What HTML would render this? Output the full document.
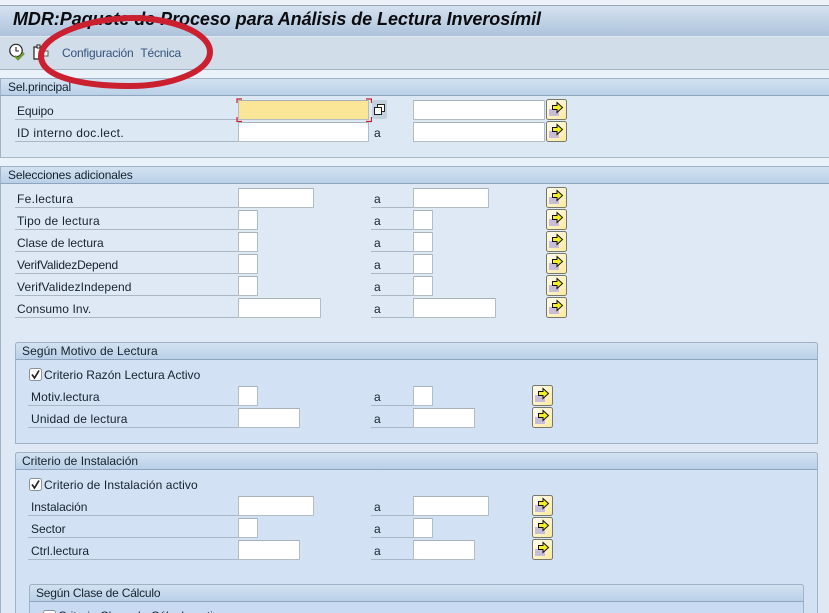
<!DOCTYPE html>
<html><head><meta charset="utf-8">
<style>
html,body{margin:0;padding:0;width:829px;height:613px;overflow:hidden}
#p{position:absolute;left:0;top:0;width:829px;height:613px;overflow:hidden;background:#dfe9f6;font-family:"Liberation Sans",sans-serif;font-size:12px;color:#16222e}
#p div,#p span.t,#p svg{position:absolute}
.t{white-space:nowrap;line-height:14px}
.i{background:#fff;border:1px solid #b4bcc4;border-top-color:#a8b0b8;box-sizing:border-box;border-radius:1px}
.l{height:1px;background:#a9b7c6}
.h{background:linear-gradient(#d3e2f2,#b9d0e7);border-bottom:1px solid #8fa5bd;box-sizing:border-box}
.b{width:21px;height:21px}
</style></head><body>
<div id="p">
<svg width="0" height="0"><defs><linearGradient id="g" x1="0" y1="0" x2="1" y2="1"><stop offset="0" stop-color="#fffdf0"/><stop offset="1" stop-color="#fbe99c"/></linearGradient><symbol id="btn" viewBox="0 0 21 21"><rect x=".5" y=".5" width="20" height="20" rx="2" fill="url(#g)" stroke="#77776a"/><rect x="3" y="10" width="10" height="7" fill="#c9bcd6"/><path d="M6.500 6.500H11V3.500L16.500 8.500 11 13.500V10.500H6.500Z" fill="#f5ef1e" stroke="#111" stroke-width="1"/></symbol></defs></svg>

<div style="left:0;top:0;width:829px;height:5px;background:#edf2f9"></div>
<div style="left:0;top:5px;width:829px;height:31px;background:linear-gradient(#d5e2f0,#adc3db);border-top:1px solid #98a8b8;box-sizing:border-box"></div>
<div style="left:0;top:36px;width:829px;height:34px;background:#d1dde8;border-bottom:1px solid #a4b4c4;border-top:1px solid #e0e8f0;box-sizing:border-box"></div>
<div style="left:0;top:70px;width:829px;height:8px;background:#e9f1f9"></div>
<span class="t" style="left:13px;top:9px;font-size:18px;line-height:20px;font-weight:bold;font-style:italic;color:#0c0c10;letter-spacing:-.06px">MDR:Paquete de Proceso para Análisis de Lectura Inverosímil</span>

<svg style="left:8px;top:43px" width="18" height="18" viewBox="0 0 18 18"><circle cx="8" cy="7.500" r="6.200" fill="#fff" stroke="#222" stroke-width="1.200"/><path d="M8 4V8H11" fill="none" stroke="#222" stroke-width="1.100"/><path d="M7 13L10 16 16 10" fill="none" stroke="#6a9a30" stroke-width="2.400"/></svg>
<svg style="left:32px;top:43px" width="18" height="18" viewBox="0 0 18 18"><path d="M2 4H11V16H2Z" fill="#fff" stroke="#222" stroke-width="1.200"/><path d="M5 2H8V5H5Z" fill="#fff" stroke="#222"/><path d="M9 8H16V13H9Z" fill="#fff" stroke="#555"/></svg>
<span class="t" style="left:62px;top:46px;color:#34537f;letter-spacing:-.2px;word-spacing:4px">Configuración Técnica</span>

<!-- Sel.principal -->
<div style="left:0;top:78px;width:829px;height:80px;background:#dde8f5;border-bottom:1px solid #a9b9ca;border-left:1px solid #9fb2c6;box-sizing:border-box"></div>
<div class="h" style="left:0;top:78px;width:829px;height:18px;border-top:1px solid #9fb2c6;border-left:1px solid #9fb2c6"></div>
<span class="t" style="left:8px;top:80px;letter-spacing:-.18px">Sel.principal</span>
<div style="left:0;top:158px;width:829px;height:8px;background:#e9f1f9"></div>
<span class="t" style="left:17px;top:104px;letter-spacing:-.13px">Equipo</span><div class="l" style="left:15px;top:119px;width:223px"></div>
<span class="t" style="left:17px;top:126px;letter-spacing:.35px">ID interno doc.lect.</span><div class="l" style="left:15px;top:141px;width:223px"></div>
<div class="i" style="left:238px;top:100px;width:131px;height:20px;background:#fbe596"></div>
<svg style="left:236px;top:98px" width="136" height="25" fill="none" stroke="#c8202f" stroke-width="1.200"><path d="M1 5V1H6M130 1H135.500V5M1 19V23.500H6M130 23.500H135.500V19"/></svg>
<div style="left:372px;top:100px;width:15px;height:19px;background:#c3d0de;border-radius:2px"></div>
<svg style="left:372px;top:101px" width="15" height="16" fill="#fff" stroke="#222"><rect x="5.500" y="3.500" width="7" height="7"/><rect x="2.500" y="6.500" width="7" height="7"/></svg>
<div class="i" style="left:413px;top:100px;width:132px;height:20px"></div>
<svg class="b" style="left:546px;top:99px"><use href="#btn"/></svg>
<div class="i" style="left:238px;top:122px;width:131px;height:20px"></div>
<span class="t" style="left:374px;top:126px">a</span>
<div class="i" style="left:413px;top:122px;width:132px;height:20px"></div>
<svg class="b" style="left:546px;top:121px"><use href="#btn"/></svg>

<!-- Selecciones adicionales -->
<div style="left:0;top:166px;width:829px;height:447px;background:#dfe9f6;border-left:1px solid #9fb2c6;box-sizing:border-box"></div>
<div class="h" style="left:0;top:166px;width:829px;height:18px;border-top:1px solid #9fb2c6;border-left:1px solid #9fb2c6"></div>
<span class="t" style="left:8px;top:168px;letter-spacing:-.15px">Selecciones adicionales</span>

<span class="t" style="left:17px;top:192px;letter-spacing:.3px">Fe.lectura</span><div class="l" style="left:15px;top:207px;width:223px"></div>
<span class="t" style="left:17px;top:214px;letter-spacing:.27px">Tipo de lectura</span><div class="l" style="left:15px;top:229px;width:223px"></div>
<span class="t" style="left:17px;top:236px">Clase de lectura</span><div class="l" style="left:15px;top:251px;width:223px"></div>
<span class="t" style="left:17px;top:258px;letter-spacing:-.2px">VerifValidezDepend</span><div class="l" style="left:15px;top:273px;width:223px"></div>
<span class="t" style="left:17px;top:280px;letter-spacing:.1px">VerifValidezIndepend</span><div class="l" style="left:15px;top:295px;width:223px"></div>
<span class="t" style="left:17px;top:302px;letter-spacing:.1px">Consumo Inv.</span><div class="l" style="left:15px;top:317px;width:223px"></div>

<div class="i" style="left:238px;top:188px;width:76px;height:20px"></div><div class="i" style="left:413px;top:188px;width:76px;height:20px"></div>
<div class="i" style="left:238px;top:210px;width:20px;height:20px"></div><div class="i" style="left:413px;top:210px;width:20px;height:20px"></div>
<div class="i" style="left:238px;top:232px;width:20px;height:20px"></div><div class="i" style="left:413px;top:232px;width:20px;height:20px"></div>
<div class="i" style="left:238px;top:254px;width:20px;height:20px"></div><div class="i" style="left:413px;top:254px;width:20px;height:20px"></div>
<div class="i" style="left:238px;top:276px;width:20px;height:20px"></div><div class="i" style="left:413px;top:276px;width:20px;height:20px"></div>
<div class="i" style="left:238px;top:298px;width:83px;height:20px"></div><div class="i" style="left:413px;top:298px;width:83px;height:20px"></div>

<span class="t" style="left:374px;top:192px">a</span><div class="l" style="left:371px;top:207px;width:42px"></div>
<span class="t" style="left:374px;top:214px">a</span><div class="l" style="left:371px;top:229px;width:42px"></div>
<span class="t" style="left:374px;top:236px">a</span><div class="l" style="left:371px;top:251px;width:42px"></div>
<span class="t" style="left:374px;top:258px">a</span><div class="l" style="left:371px;top:273px;width:42px"></div>
<span class="t" style="left:374px;top:280px">a</span><div class="l" style="left:371px;top:295px;width:42px"></div>
<span class="t" style="left:374px;top:302px">a</span><div class="l" style="left:371px;top:317px;width:42px"></div>

<svg class="b" style="left:546px;top:187px"><use href="#btn"/></svg>
<svg class="b" style="left:546px;top:209px"><use href="#btn"/></svg>
<svg class="b" style="left:546px;top:231px"><use href="#btn"/></svg>
<svg class="b" style="left:546px;top:253px"><use href="#btn"/></svg>
<svg class="b" style="left:546px;top:275px"><use href="#btn"/></svg>
<svg class="b" style="left:546px;top:297px"><use href="#btn"/></svg>

<!-- Según Motivo -->
<div style="left:15px;top:342px;width:803px;height:102px;background:#d2e2f4;border:1px solid #9fb2c6;border-radius:3px 3px 0 0;box-sizing:border-box"></div>
<div class="h" style="left:15px;top:342px;width:803px;height:18px;border:1px solid #9fb2c6;border-bottom-color:#8fa5bd;border-radius:3px 3px 0 0"></div>
<span class="t" style="left:22px;top:344px;letter-spacing:.1px">Según Motivo de Lectura</span>
<svg style="left:29px;top:368px" width="14" height="14"><rect x=".5" y=".5" width="12" height="12" rx="2" fill="#fff" stroke="#8a939c"/><path d="M3 6.500L5.500 10 10 2.500" fill="none" stroke="#222" stroke-width="1.700"/></svg>
<span class="t" style="left:44px;top:368px;letter-spacing:.03px">Criterio Razón Lectura Activo</span>
<span class="t" style="left:31px;top:390px;letter-spacing:.12px">Motiv.lectura</span><div class="l" style="left:28px;top:405px;width:210px"></div>
<span class="t" style="left:31px;top:412px;letter-spacing:.15px">Unidad de lectura</span><div class="l" style="left:28px;top:427px;width:210px"></div>
<div class="i" style="left:238px;top:386px;width:20px;height:20px"></div><div class="i" style="left:413px;top:386px;width:20px;height:20px"></div>
<div class="i" style="left:238px;top:408px;width:62px;height:20px"></div><div class="i" style="left:413px;top:408px;width:62px;height:20px"></div>
<span class="t" style="left:374px;top:390px">a</span><div class="l" style="left:371px;top:405px;width:42px"></div>
<span class="t" style="left:374px;top:412px">a</span><div class="l" style="left:371px;top:427px;width:42px"></div>
<svg class="b" style="left:532px;top:385px"><use href="#btn"/></svg>
<svg class="b" style="left:532px;top:407px"><use href="#btn"/></svg>

<!-- Criterio de Instalación -->
<div style="left:15px;top:452px;width:803px;height:170px;background:#d2e2f4;border:1px solid #9fb2c6;border-radius:3px 3px 0 0;box-sizing:border-box"></div>
<div class="h" style="left:15px;top:452px;width:803px;height:18px;border:1px solid #9fb2c6;border-bottom-color:#8fa5bd;border-radius:3px 3px 0 0"></div>
<span class="t" style="left:22px;top:454px">Criterio de Instalación</span>
<svg style="left:29px;top:478px" width="14" height="14"><rect x=".5" y=".5" width="12" height="12" rx="2" fill="#fff" stroke="#8a939c"/><path d="M3 6.500L5.500 10 10 2.500" fill="none" stroke="#222" stroke-width="1.700"/></svg>
<span class="t" style="left:44px;top:478px;letter-spacing:.1px">Criterio de Instalación activo</span>
<span class="t" style="left:31px;top:500px;letter-spacing:-.1px">Instalación</span><div class="l" style="left:28px;top:515px;width:210px"></div>
<span class="t" style="left:31px;top:522px">Sector</span><div class="l" style="left:28px;top:537px;width:210px"></div>
<span class="t" style="left:31px;top:544px">Ctrl.lectura</span><div class="l" style="left:28px;top:559px;width:210px"></div>
<div class="i" style="left:238px;top:496px;width:76px;height:20px"></div><div class="i" style="left:413px;top:496px;width:76px;height:20px"></div>
<div class="i" style="left:238px;top:518px;width:20px;height:20px"></div><div class="i" style="left:413px;top:518px;width:20px;height:20px"></div>
<div class="i" style="left:238px;top:540px;width:62px;height:20px"></div><div class="i" style="left:413px;top:540px;width:62px;height:20px"></div>
<span class="t" style="left:374px;top:500px">a</span><div class="l" style="left:371px;top:515px;width:42px"></div>
<span class="t" style="left:374px;top:522px">a</span><div class="l" style="left:371px;top:537px;width:42px"></div>
<span class="t" style="left:374px;top:544px">a</span><div class="l" style="left:371px;top:559px;width:42px"></div>
<svg class="b" style="left:532px;top:495px"><use href="#btn"/></svg>
<svg class="b" style="left:532px;top:517px"><use href="#btn"/></svg>
<svg class="b" style="left:532px;top:539px"><use href="#btn"/></svg>

<!-- Según Clase de Cálculo -->
<div style="left:29px;top:584px;width:775px;height:40px;background:#c8dbf3;border:1px solid #9fb2c6;border-radius:3px 3px 0 0;box-sizing:border-box"></div>
<div class="h" style="left:29px;top:584px;width:775px;height:18px;border:1px solid #9fb2c6;border-bottom-color:#8fa5bd;border-radius:3px 3px 0 0"></div>
<span class="t" style="left:36px;top:586px;letter-spacing:-.2px">Según Clase de Cálculo</span>
<svg style="left:43px;top:610px" width="14" height="14"><rect x=".5" y=".5" width="12" height="12" rx="2" fill="#fff" stroke="#8a939c"/></svg>
<span class="t" style="left:58px;top:609px">Criterio Clase de Cálculo activo</span>

<!-- Red ellipse -->
<svg style="left:0;top:0" width="260" height="100" fill="none"><path d="M133 18C170 18 210 32 210 52 210 72 170 86 130 86 85 86 41 78 41 56 41 35 90 18 133 18Z" stroke="#cb2030" stroke-width="6"/></svg>
</div>
</body></html>
